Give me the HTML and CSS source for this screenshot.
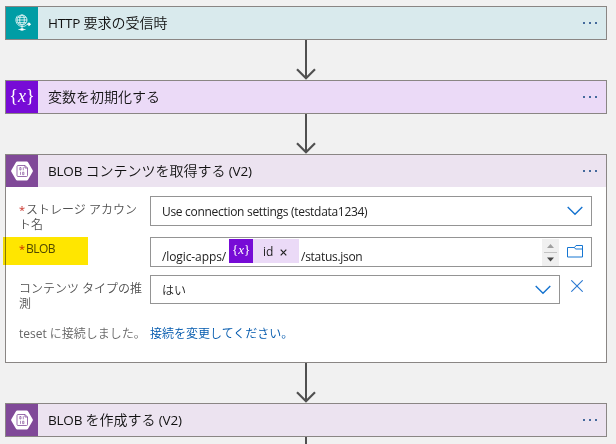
FILE: index.html
```html
<!DOCTYPE html>
<html lang="ja">
<head>
<meta charset="utf-8">
<title>Logic Apps</title>
<link rel="stylesheet" href="styles.css">
</head>
<body>
<svg class="defs" aria-hidden="true">
  <symbol id="arrow" viewBox="0 0 24 40"><path d="M12 0V38" fill="none" stroke="#505050" stroke-width="2"/><path d="M3 29.2L12 38.2L21 29.2" fill="none" stroke="#505050" stroke-width="2.2"/></symbol>
  <symbol id="dots" viewBox="0 0 16 2"><path d="M1 0h2v2H1zM7 0h2v2H7zM13 0h2v2h-2z" fill="#456a9c"/></symbol>
  <symbol id="blob" viewBox="0 0 32 32"><path d="M11.2 6.500h9.600q.8 0 1.200.7l4.700 8.100q.4.700 0 1.400L22 24.800q-.4.7-1.200.7h-9.600q-.8 0-1.200-.7L5.300 16.700q-.4-.7 0-1.400L10 7.200q.4-.7 1.200-.7z" fill="#fff"/><path d="M12 10.500h7l2.500 2.500v7.500q0 1-1 1H12q-1 0-1-1v-9q0-1 1-1zM19 10.500v2.500h2.500" fill="none" stroke="#804998" stroke-width=".8"/><path d="M13.800 12.500h1.200v2.500h-1.200zM17.300 12.200v3.100M14.500 16.800v3.100M16.600 17.200h1.300v2.500h-1.300z" fill="none" stroke="#804998" stroke-width=".65"/></symbol>
  <symbol id="chevron" viewBox="0 0 16 10"><path d="M.7 1L8 8.300L15.300 1" fill="none" stroke="#1573cf" stroke-width="1.400"/></symbol>
</svg>
<main class="flow">
  <section class="card teal">
    <header class="head">
      <span class="icon"><svg width="32" height="32" viewBox="0 0 32 32" fill="none" stroke="#fff" stroke-width=".8"><circle cx="16" cy="13" r="5"/><ellipse cx="16" cy="13" rx="2.300" ry="5"/><path d="M11 13h10M12 10.300h8M12 15.700h8M12 8.500C8.500 11 9 18.500 16 19.600c2 0 3.500-.6 4.800-2M16 19v3M12.500 22.500h7"/><path d="M21 17.200h3M22.500 15.700l1.700 1.500-1.700 1.500" stroke-width="1.200"/><path d="M14.500 22.500h3" stroke-width="2.200"/></svg></span>
      <h2 class="title"><span class="latin">HTTP </span>要求の受信時</h2><svg class="dots"><use href="#dots"/></svg>
    </header>
  </section>
  <svg class="arrow"><use href="#arrow"/></svg>
  <section class="card violet">
    <header class="head">
      <span class="icon var">{<i>x</i>}</span>
      <h2 class="title">変数を初期化する</h2><svg class="dots"><use href="#dots"/></svg>
    </header>
  </section>
  <svg class="arrow"><use href="#arrow"/></svg>
  <section class="card purple open">
    <header class="head">
      <span class="icon"><svg width="32" height="32"><use href="#blob"/></svg></span>
      <h2 class="title"><span class="latin">BLOB </span>コンテンツを取得する<span class="latin"> (V2)</span></h2><svg class="dots"><use href="#dots"/></svg>
    </header>
    <div class="body">
      <div class="row account">
        <div class="label"><b>*</b>ストレージ アカウン<br>ト名</div>
        <div class="field"><span class="value">Use connection settings (testdata1234)</span><svg class="chev"><use href="#chevron"/></svg></div>
      </div>
      <div class="row path">
        <div class="label"><b>*</b><span class="blobname">BLOB</span><div class="mark"></div></div>
        <div class="field">
          <span class="value low">/logic-apps/</span>
          <span class="token"><span class="tokicon">{<i>x</i>}</span><span class="tokname">id</span><svg width="7" height="7" viewBox="0 0 7 7"><path d="M.7.7l5.600 5.600M6.300.7L.7 6.300" stroke="#222" stroke-width="1.200"/></svg></span>
          <span class="value low tail">/status.json</span>
          <svg class="spin" width="17" height="27" viewBox="0 0 17 27"><path d="M0 0h17v27H0z" fill="#f0f0f0"/><path d="M5 9L8.500 5L12 9z" fill="#a0a0a0"/><path d="M2 13.500h13" stroke="#c2c2c2"/><path d="M5 18.500h7L8.500 22.500z" fill="#484848"/></svg>
          <svg class="folder" width="16" height="13" viewBox="0 0 16 13" fill="none" stroke="#1676d2"><path d="M.5 2.500H7.500L9 .5h6.500v11.500H.5zM7.500 2.500L8.500 4h7"/></svg>
        </div>
      </div>
      <div class="row type">
        <div class="label">コンテンツ タイプの推<br>測</div>
        <div class="field short"><span class="value kana">はい</span><svg class="chev"><use href="#chevron"/></svg></div>
        <svg class="clear" width="12" height="12" viewBox="0 0 12 12"><path d="M.3.3l11.400 11.400M11.700.3L.3 11.700" stroke="#2b79d2" stroke-width="1.100"/></svg>
      </div>
      <p class="connection"><span class="status"><span class="account-name">teset</span> に接続しました。</span><a>接続を変更してください。</a></p>
    </div>
  </section>
  <svg class="arrow"><use href="#arrow"/></svg>
  <section class="card purple">
    <header class="head">
      <span class="icon"><svg width="32" height="32"><use href="#blob"/></svg></span>
      <h2 class="title"><span class="latin">BLOB </span>を作成する<span class="latin"> (V2)</span></h2><svg class="dots"><use href="#dots"/></svg>
    </header>
  </section>
  <div class="stub"></div>
</main>
</body>
</html>
```

FILE: styles.css
```css
* { box-sizing: border-box; }
html, body { margin: 0; height: 444px; overflow: hidden; }
body { background: #f1f1f1; color: #111; font-family: "Open Sans", "Noto Sans CJK JP", sans-serif; }
svg { display: block; flex: none; }
.defs { width: 0; height: 0; position: absolute; }
.flow { width: 602px; padding-top: 6px; margin-left: 5px; display: flex; flex-direction: column; }
.card { flex: none; height: 34px; border: 1px solid #8a8684; background: #fff; }
.open { height: 209px; }
.head { height: 32px; display: flex; align-items: center; background: var(--tint); }
.teal { --tint: #d9eaed; --solid: #009da5; }
.violet { --tint: #ebdaf7; --solid: #770bd6; }
.purple { --tint: #ece3f0; --solid: #804998; }
.icon { flex: none; width: 32px; height: 32px; background: var(--solid); color: #fff; }
.var { font: 18px/30px "Liberation Serif", serif; text-align: center; }
.title { flex: 1; margin: 0 0 0 10px; font-size: 14px; font-weight: 350; line-height: 20px; white-space: pre; }
.latin { font-size: 13.5px; font-weight: 400; letter-spacing: -.2px; }
.dots { width: 16px; height: 2px; margin-right: 8px; }
.arrow { flex: none; width: 24px; height: 40px; margin-left: 289px; }
.stub { flex: none; width: 2px; height: 7px; margin-left: 300px; background: #505050; }
.body { padding: 9px 14px 0 13px; font-size: 12px; }
.row { display: flex; align-items: flex-start; }
.account { height: 41px; }
.path { height: 38px; }
.type { height: 49px; }
.label { position: relative; flex: none; width: 131px; padding-top: 6px; color: #505050; font-size: 12px; font-weight: 350; line-height: 15px; white-space: nowrap; }
.label b { display: inline-block; width: 7px; font-size: 11px; color: #c92d25; font-weight: 400; }
.path .label { padding-top: 4px; font-weight: 400; }
.blobname { letter-spacing: -.5px; }
.mark { position: absolute; left: -16px; top: 0; width: 85px; height: 28px; background: #ffe600; mix-blend-mode: multiply; }
.field { width: 442px; height: 30px; border: 1px solid #949494; display: flex; align-items: center; padding: 0 8px 0 11px; background: #fff; color: #222; }
.short { width: 410px; height: 29px; }
.value { white-space: nowrap; letter-spacing: -.3px; }
.low { padding-top: 8px; letter-spacing: -.1px; }
.tail { letter-spacing: -.3px; }
.chev { width: 16px; height: 10px; margin-left: auto; }
.token { flex: none; display: flex; align-items: center; width: 70px; height: 24px; margin: -3px 2px 0 3px; background: #ebdaf7; }
.tokicon { width: 24px; height: 24px; color: #fff; background: #770bd6; font: 13px/22px "Liberation Serif", serif; text-align: center; }
.tokname { margin: 2px 7px 0 10px; }
.token svg { margin-top: 3px; }
.spin { margin-left: auto; }
.folder { margin: -1px 0 0 8px; }
.clear { margin: 5px 0 0 11px; }
.kana { letter-spacing: 0; font-weight: 350; }
.connection { display: flex; margin: 0; font-weight: 350; line-height: 20px; color: #666; white-space: nowrap; }
.status { width: 131px; }
.account-name { font-weight: 400; }
.connection a { color: #0058ad; }
```
